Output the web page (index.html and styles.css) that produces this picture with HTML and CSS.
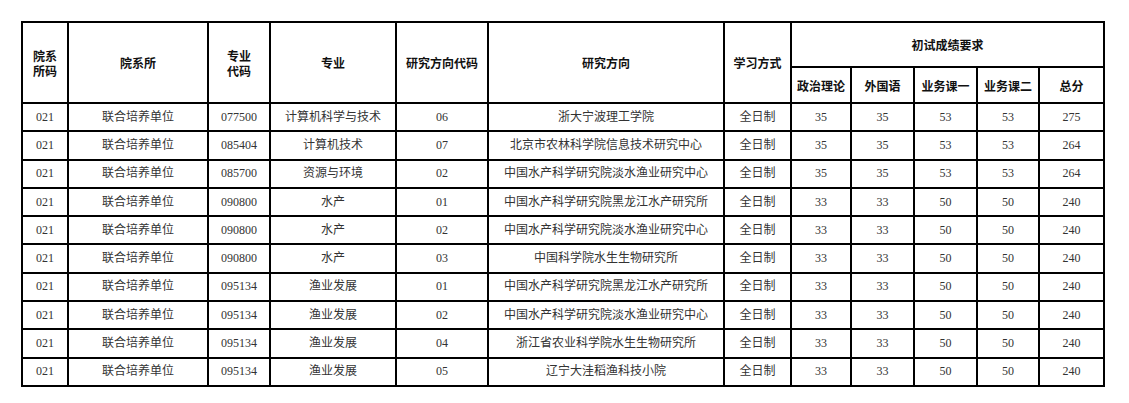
FILE: index.html
```html
<!DOCTYPE html>
<html lang="zh-CN">
<head>
<meta charset="utf-8">
<link rel="stylesheet" href="styles.css">
</head>
<body>
<table class="score-table">
<colgroup>
<col class="c1"><col class="c2"><col class="c3"><col class="c4"><col class="c5"><col class="c6"><col class="c7"><col class="c8"><col class="c9"><col class="c10"><col class="c11"><col class="c12">
</colgroup>
<thead>
<tr class="h1">
<th rowspan="2">院系<br>所码</th>
<th rowspan="2">院系所</th>
<th rowspan="2">专业<br>代码</th>
<th rowspan="2">专业</th>
<th rowspan="2">研究方向代码</th>
<th rowspan="2">研究方向</th>
<th rowspan="2">学习方式</th>
<th colspan="5">初试成绩要求</th>
</tr>
<tr class="h2">
<th>政治理论</th><th>外国语</th><th>业务课一</th><th>业务课二</th><th>总分</th>
</tr>
</thead>
<tbody>
<tr><td>021</td><td>联合培养单位</td><td>077500</td><td>计算机科学与技术</td><td>06</td><td>浙大宁波理工学院</td><td>全日制</td><td>35</td><td>35</td><td>53</td><td>53</td><td>275</td></tr>
<tr><td>021</td><td>联合培养单位</td><td>085404</td><td>计算机技术</td><td>07</td><td>北京市农林科学院信息技术研究中心</td><td>全日制</td><td>35</td><td>35</td><td>53</td><td>53</td><td>264</td></tr>
<tr><td>021</td><td>联合培养单位</td><td>085700</td><td>资源与环境</td><td>02</td><td>中国水产科学研究院淡水渔业研究中心</td><td>全日制</td><td>35</td><td>35</td><td>53</td><td>53</td><td>264</td></tr>
<tr><td>021</td><td>联合培养单位</td><td>090800</td><td>水产</td><td>01</td><td>中国水产科学研究院黑龙江水产研究所</td><td>全日制</td><td>33</td><td>33</td><td>50</td><td>50</td><td>240</td></tr>
<tr><td>021</td><td>联合培养单位</td><td>090800</td><td>水产</td><td>02</td><td>中国水产科学研究院淡水渔业研究中心</td><td>全日制</td><td>33</td><td>33</td><td>50</td><td>50</td><td>240</td></tr>
<tr><td>021</td><td>联合培养单位</td><td>090800</td><td>水产</td><td>03</td><td>中国科学院水生生物研究所</td><td>全日制</td><td>33</td><td>33</td><td>50</td><td>50</td><td>240</td></tr>
<tr><td>021</td><td>联合培养单位</td><td>095134</td><td>渔业发展</td><td>01</td><td>中国水产科学研究院黑龙江水产研究所</td><td>全日制</td><td>33</td><td>33</td><td>50</td><td>50</td><td>240</td></tr>
<tr><td>021</td><td>联合培养单位</td><td>095134</td><td>渔业发展</td><td>02</td><td>中国水产科学研究院淡水渔业研究中心</td><td>全日制</td><td>33</td><td>33</td><td>50</td><td>50</td><td>240</td></tr>
<tr><td>021</td><td>联合培养单位</td><td>095134</td><td>渔业发展</td><td>04</td><td>浙江省农业科学院水生生物研究所</td><td>全日制</td><td>33</td><td>33</td><td>50</td><td>50</td><td>240</td></tr>
<tr><td>021</td><td>联合培养单位</td><td>095134</td><td>渔业发展</td><td>05</td><td>辽宁大洼稻渔科技小院</td><td>全日制</td><td>33</td><td>33</td><td>50</td><td>50</td><td>240</td></tr>
</tbody>
</table>
</body>
</html>
```
FILE: styles.css
```css
html, body {
  margin: 0;
  padding: 0;
  background: #fff;
}
body {
  padding: 21px 0 0 21px;
  font-family: "Liberation Serif", "Noto Sans CJK SC", serif;
  font-size: 12px;
}
.score-table {
  border-collapse: collapse;
  table-layout: fixed;
  width: 1084px;
}
.score-table th,
.score-table td {
  border: 2px solid #000;
  text-align: center;
  vertical-align: middle;
  padding: 0 2px;
  line-height: 15px;
  white-space: nowrap;
  overflow: hidden;
}
.score-table th {
  font-family: "Noto Sans CJK SC", sans-serif;
  font-weight: bold;
  color: #111;
  font-size: 12px;
}
.score-table td {
  color: #333;
  font-weight: normal;
}
.h1 { height: 45px; }
.h2 { height: 36px; }
.score-table tbody tr { height: 28.3px; }
.c1 { width: 46px; }
.c2 { width: 140px; }
.c3 { width: 62px; }
.c4 { width: 126px; }
.c5 { width: 92px; }
.c6 { width: 236px; }
.c7 { width: 67px; }
.c8 { width: 60px; }
.c9 { width: 63px; }
.c10 { width: 63px; }
.c11 { width: 62px; }
.c12 { width: 65px; }
```
